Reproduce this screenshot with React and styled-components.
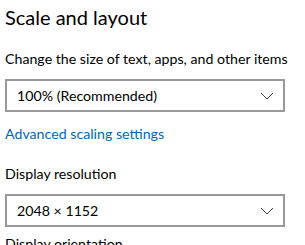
import React from 'react'
import styled, { createGlobalStyle } from 'styled-components'

const Global = createGlobalStyle`
    body {
        margin: 0;
        background: #fff;
        font-family: Lato, "Liberation Sans", sans-serif;
        color: #000;
    }
`

const Page = styled.div`
    width: 305px;
    height: 245px;
    overflow: hidden;
    padding: 3px 0 0 5px;
    box-sizing: border-box;
    display: flex;
    flex-direction: column;
    & > * { flex-shrink: 0; }
`
const Title = styled.h1`
    margin: 0 0 18px;
    font-size: 20px;
    font-weight: 400;
    line-height: 28px;
`
const Label = styled.div`
    font-size: 14.2px;
    line-height: 20px;
    margin-top: ${p => p.$top || 0}px;
    margin-bottom: ${p => p.$gap || 8}px;
    white-space: nowrap;
`
const Select = styled.div`
    width: 280px;
    height: 33px;
    box-sizing: border-box;
    border: 2px solid #999;
    display: flex;
    align-items: center;
    justify-content: space-between;
    padding: 0 9px 0 10px;
    font-size: 14.2px;
`
const Link = styled.a`
    color: #0067b8;
    font-size: 14.2px;
    line-height: 20px;
    margin: 12px 0 20px;
    text-decoration: none;
`
const Chevron = () => (
    <svg width="14" height="8" viewBox="0 0 14 8">
        <path d="M1 1l6 6 6-6" fill="none" stroke="#444" strokeWidth="1" />
    </svg>
)

const App = () => {
    return (
    <Page>
        <Global />
        <Title>Scale and layout</Title>
        <Label $gap={10}>Change the size of text, apps, and other items</Label>
        <Select>
            <span>100% (Recommended)</span>
            <Chevron />
        </Select>
        <Link href="#">Advanced scaling settings</Link>
        <Label $gap={10}>Display resolution</Label>
        <Select>
            <span>2048 × 1152</span>
            <Chevron />
        </Select>
        <Label $top={7}>Display orientation</Label>
    </Page>
    )
}

export default App
